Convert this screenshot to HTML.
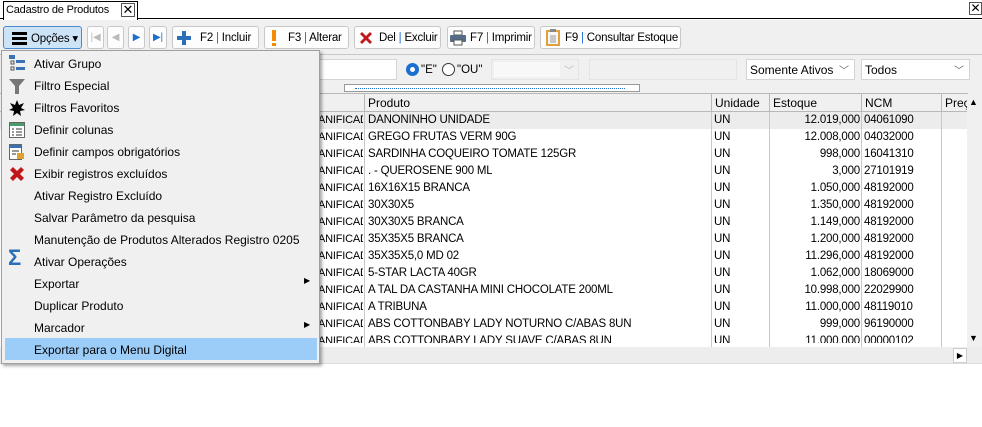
<!DOCTYPE html>
<html><head><meta charset="utf-8">
<style>
*{box-sizing:border-box;margin:0;padding:0}
body{width:982px;height:427px;overflow:hidden;background:#fff;font-family:"Liberation Sans",sans-serif;font-size:12px;color:#000;position:relative}
.a{position:absolute}
.btn{position:absolute;top:26px;height:23px;border:1px solid #c8c8c8;border-radius:3px;background:#fdfdfd;display:flex;align-items:center;font-size:11.5px;letter-spacing:-0.2px;white-space:nowrap}
.bar{color:#1a6fd0}
.inp{position:absolute;top:59px;height:21px;border:1px solid #d4d4d4;background:#fff}
.hd{position:absolute;top:94px;height:18px;line-height:18px;border-right:1px solid #b8b8b8;padding-left:3px;font-size:12px}
.row{position:absolute;left:318px;width:650px;height:17px;font-size:11.5px;line-height:17px;letter-spacing:-0.2px}
.row span{position:absolute;top:0;white-space:nowrap;overflow:hidden}
.vl{position:absolute;top:94px;height:270px;width:1px;background:#c8c8c8}
.mi{position:absolute;left:32px;font-size:12px;height:22px;line-height:22px;white-space:nowrap}
.ic{position:absolute;left:7px;width:16px;height:16px}
</style></head><body>
<div class="a" style="left:0;top:0;width:982px;height:19px;border-bottom:1px solid #000;background:#fff"></div>
<div class="a" style="left:3px;top:1px;width:135px;height:19px;border:1px solid #000;border-bottom:none;background:#fff"></div>
<div class="a" style="left:6px;top:4px;font-size:11px;letter-spacing:-0.2px">Cadastro de Produtos</div>
<div class="a" style="left:121px;top:3px;width:14px;height:14px;border:1px solid #555;font-size:13px;line-height:11px;text-align:center">✕</div>
<div class="a" style="left:969px;top:2px;width:13px;height:13px;border:1px solid #555;font-size:12px;line-height:11px;text-align:center">✕</div>
<div class="a" style="left:0;top:20px;width:982px;height:344px;background:#f0f0f0"></div>
<div class="a" style="left:0;top:54px;width:982px;height:1px;background:#c8c8c8"></div>
<div class="btn" style="left:3px;width:79px;background:#cde4f7;border-color:#4a8ad0">
 <div class="a" style="left:8px;top:5px;width:15px;height:3px;background:#000;box-shadow:0 5px 0 #000,0 10px 0 #000"></div>
 <span style="position:absolute;left:27px;top:4px">Opções ▾</span></div>
<div class="btn" style="left:87px;width:17px;justify-content:center;color:#bbb;font-size:10px">|◀</div>
<div class="btn" style="left:107px;width:17px;justify-content:center;color:#bbb;font-size:10px">◀</div>
<div class="btn" style="left:128px;width:17px;justify-content:center;color:#1a6fd0;font-size:10px">▶</div>
<div class="btn" style="left:149px;width:18px;justify-content:center;color:#1a6fd0;font-size:10px">▶|</div>
<div class="btn" style="left:172px;width:87px"><svg style="margin-left:3px" width="16" height="16"><path d="M6 1h4v5h5v4h-5v5H6v-5H1V6h5z" fill="#2b6fb8"/></svg><span style="margin-left:8px">F2 <span class="bar">|</span> Incluir</span></div>
<div class="btn" style="left:264px;width:85px"><div style="margin-left:7px;width:4px;height:16px;position:relative"><div style="width:4px;height:11px;background:#f28c00"></div><div style="width:4px;height:3px;margin-top:2px;background:#f28c00"></div></div><span style="margin-left:12px">F3 <span class="bar">|</span> Alterar</span></div>
<div class="btn" style="left:354px;width:87px"><svg style="margin-left:3px" width="16" height="16"><path d="M2 4l2-2 4 4 4-4 2 2-4 4 4 4-2 2-4-4-4 4-2-2 4-4z" fill="#c01818"/></svg><span style="margin-left:5px">Del <span class="bar">|</span> Excluir</span></div>
<div class="btn" style="left:447px;width:88px"><svg style="margin-left:1px" width="18" height="16"><rect x="5" y="1" width="8" height="4" fill="#fff" stroke="#555"/><rect x="1" y="5" width="16" height="7" rx="1" fill="#566c86"/><rect x="5" y="10" width="8" height="5" fill="#fff" stroke="#555"/></svg><span style="margin-left:3px">F7 <span class="bar">|</span> Imprimir</span></div>
<div class="btn" style="left:540px;width:141px"><svg style="margin-left:5px" width="14" height="17"><rect x="1" y="2" width="12" height="14" fill="#f6f6f6" stroke="#e0a040" stroke-width="2"/><rect x="4" y="0" width="6" height="3" fill="#888"/><path d="M4 7h6M4 9h6M4 11h6M4 13h6" stroke="#999"/></svg><span style="margin-left:5px">F9 <span class="bar">|</span> Consultar Estoque</span></div>
<div class="inp" style="left:310px;width:87px"></div>
<div class="a" style="left:406px;top:63px;width:13px;height:13px;border-radius:50%;border:4px solid #1a6fd0;background:#fff"></div>
<div class="a" style="left:421px;top:64px;font-size:11.5px">"E"</div>
<div class="a" style="left:442px;top:63px;width:13px;height:13px;border-radius:50%;border:1px solid #333;background:#fff"></div>
<div class="a" style="left:457px;top:64px;font-size:11.5px">"OU"</div>
<div class="inp" style="left:491px;width:88px;background:#f0f0f0;border-color:#e4e4e4"><div class="a" style="left:2px;top:2px;width:66px;height:15px;background:#f8f8f8"></div><span class="a" style="left:72px;top:2px;color:#bbb;font-size:10px">﹀</span></div>
<div class="inp" style="left:589px;width:148px;background:#f0f0f0;border-color:#e4e4e4"></div>
<div class="inp" style="left:746px;width:109px;padding:3px 0 0 3px;font-size:12px">Somente Ativos<span class="a" style="left:92px;top:2px;color:#666;font-size:10px">﹀</span></div>
<div class="inp" style="left:861px;width:109px;padding:3px 0 0 3px;font-size:12px">Todos<span class="a" style="left:92px;top:2px;color:#666;font-size:10px">﹀</span></div>
<div class="a" style="left:344px;top:84px;width:296px;height:8px;border:1px solid #999;background:#fff"><div class="a" style="left:10px;top:3px;width:270px;border-top:1px dotted #1a6fd0"></div></div>
<div class="a" style="left:0;top:93px;width:968px;height:1px;background:#b8b8b8"></div>
<div class="a" style="left:0;top:111px;width:968px;height:1px;background:#b8b8b8"></div>
<div class="a" style="left:0;top:94px;width:968px;height:17px;background:#f0f0f0"></div>
<div class="hd" style="left:318px;width:47px"></div>
<div class="hd" style="left:365px;width:347px">Produto</div>
<div class="hd" style="left:712px;width:58px">Unidade</div>
<div class="hd" style="left:770px;width:92px">Estoque</div>
<div class="hd" style="left:862px;width:80px">NCM</div>
<div class="hd" style="left:942px;width:26px;border-right:none">Preç</div>
<div class="a" style="left:0;top:112px;width:968px;height:235px;background:#fff"></div>
<div class="a" style="left:0;top:112px;width:968px;height:17px;background:#ececec"></div>
<div class="vl" style="left:364px;top:112px;height:235px"></div>
<div class="vl" style="left:711px;top:112px;height:235px"></div>
<div class="vl" style="left:769px;top:112px;height:235px"></div>
<div class="vl" style="left:861px;top:112px;height:235px"></div>
<div class="vl" style="left:941px;top:112px;height:235px"></div>
<div id="rows"></div>
<div class="a" style="left:967px;top:94px;width:15px;height:253px;background:#f0f0f0"></div>
<div class="a" style="left:969px;top:97px;font-size:9px">▲</div>
<div class="a" style="left:969px;top:333px;font-size:9px">▼</div>
<div class="a" style="left:0;top:347px;width:982px;height:17px;background:#ededed;border-bottom:1px solid #ddd"></div>
<div class="a" style="left:953px;top:348px;width:14px;height:15px;background:#fff;border:1px solid #ccc;font-size:8px;line-height:13px;text-align:center">▶</div>
<div class="a" style="left:0;top:364px;width:982px;height:63px;background:#fff"></div>
<script>
var d=[["DANONINHO UNIDADE","12.019,000","04061090"],["GREGO FRUTAS VERM 90G","12.008,000","04032000"],["SARDINHA COQUEIRO TOMATE 125GR","998,000","16041310"],[". - QUEROSENE 900 ML","3,000","27101919"],["16X16X15 BRANCA","1.050,000","48192000"],["30X30X5","1.350,000","48192000"],["30X30X5 BRANCA","1.149,000","48192000"],["35X35X5 BRANCA","1.200,000","48192000"],["35X35X5,0 MD 02","11.296,000","48192000"],["5-STAR LACTA 40GR","1.062,000","18069000"],["A TAL DA CASTANHA MINI CHOCOLATE 200ML","10.998,000","22029900"],["A TRIBUNA","11.000,000","48119010"],["ABS COTTONBABY LADY NOTURNO C/ABAS 8UN","999,000","96190000"],["ABS COTTONBABY LADY SUAVE C/ABAS 8UN","11.000,000","00000102"]];
var h="";d.forEach(function(r,i){var p=(i<3?" ":"");h+='<div class="row" style="top:'+(112+i*17)+'px;'+(i==13?'height:10px;overflow:hidden;':'')+'"><span style="left:0;width:45px;font-size:11px">ANIFICAD</span><span style="left:50px">'+p+r[0]+'</span><span style="left:396px">UN</span><span style="left:452px;width:90px;text-align:right">'+r[1]+'</span><span style="left:546px">'+r[2]+'</span></div>'});
document.getElementById("rows").innerHTML=h;
</script>
<div class="a" style="left:1px;top:50px;width:319px;height:314px;background:#f0f0f0;border:1px solid #a0a0a0;box-shadow:2px 2px 3px rgba(0,0,0,.35)">
<div class="a" style="left:3px;top:287px;width:312px;height:22px;background:#9bcdf8"></div>
<svg class="ic" style="top:4px" viewBox="0 0 16 16"><rect x="0" y="0" width="6" height="4" fill="#3b72b5"/><rect x="7" y="5" width="9" height="3" fill="#3b72b5"/><rect x="7" y="12" width="9" height="3" fill="#3b72b5"/><rect x="2" y="6" width="3" height="3" fill="none" stroke="#555"/><rect x="2" y="12" width="3" height="3" fill="none" stroke="#555"/></svg>
<svg class="ic" style="top:27px" viewBox="0 0 16 16"><path d="M0 1h16L10 8v8H6V8z" fill="#777"/></svg>
<svg class="ic" style="top:49px" viewBox="0 0 16 16"><path d="M8 0l2 5 5-2-3 5 4 2-5 1 1 5-4-3-4 3 1-5-5-1 4-2-3-5 5 2z" fill="#000"/></svg>
<svg class="ic" style="top:71px" viewBox="0 0 16 16"><rect x=".5" y=".5" width="15" height="15" fill="#fff" stroke="#666"/><rect x="1" y="1" width="14" height="3" fill="#4a9a6a"/><path d="M3 7h2M7 7h6M3 10h2M7 10h6M3 13h2M7 13h6" stroke="#333"/></svg>
<svg class="ic" style="top:93px" viewBox="0 0 16 16"><rect x=".5" y=".5" width="12" height="15" fill="#fff" stroke="#666"/><rect x="1" y="1" width="11" height="3" fill="#3b72b5"/><path d="M3 7h7M3 10h4" stroke="#333"/><rect x="8" y="9" width="7" height="6" fill="#e0a030"/></svg>
<svg class="ic" style="top:115px" viewBox="0 0 16 16"><path d="M1 4l3-3 4 4 4-4 3 3-4 4 4 4-3 3-4-4-4 4-3-3 4-4z" fill="#c01818"/></svg>
<div class="a" style="left:6px;top:196px;font-size:22px;line-height:22px;color:#2b6fb8;font-weight:bold">Σ</div>
<div class="a" style="left:302px;top:225px;font-size:8px">▶</div>
<div class="a" style="left:302px;top:269px;font-size:8px">▶</div>
<div class="mi" style="top:2px">Ativar Grupo</div>
<div class="mi" style="top:24px">Filtro Especial</div>
<div class="mi" style="top:46px">Filtros Favoritos</div>
<div class="mi" style="top:68px">Definir colunas</div>
<div class="mi" style="top:90px">Definir campos obrigatórios</div>
<div class="mi" style="top:112px">Exibir registros excluídos</div>
<div class="mi" style="top:134px">Ativar Registro Excluído</div>
<div class="mi" style="top:156px">Salvar Parâmetro da pesquisa</div>
<div class="mi" style="top:178px">Manutenção de Produtos Alterados Registro 0205</div>
<div class="mi" style="top:200px">Ativar Operações</div>
<div class="mi" style="top:222px">Exportar</div>
<div class="mi" style="top:244px">Duplicar Produto</div>
<div class="mi" style="top:266px">Marcador</div>
<div class="mi" style="top:288px">Exportar para o Menu Digital</div>
</div>
</body></html>
